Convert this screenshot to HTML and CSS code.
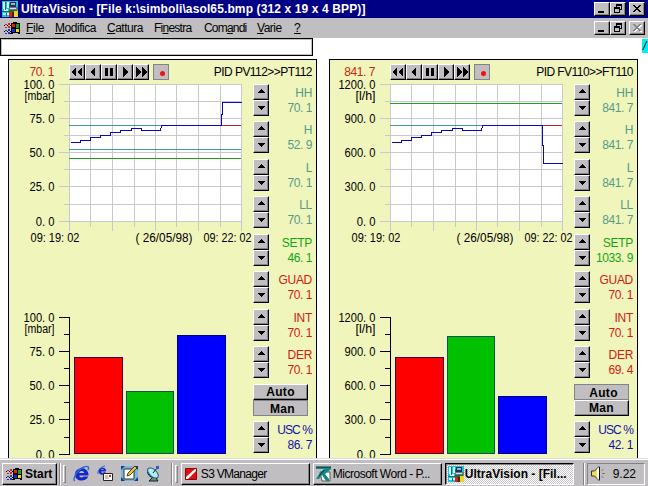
FILE: index.html
```html
<!DOCTYPE html>
<html lang="it">
<head>
    <meta charset="UTF-8">
    <title>UltraVision - [File k:\simboli\asol65.bmp (312 x 19 x 4 BPP)]</title>
    <link rel="stylesheet" href="styles.css">
</head>
<body>
    <!-- shared icons -->
    <svg class="defs" width="0" height="0">
        <symbol id="flag" viewBox="0 0 17 14">
            <path d="M7 2h2V1h4v1h3v11h-2v-1H9v1H7z" fill="#000"/>
            <path d="M8 3h3v3H8z" fill="#e02010"/><path d="M12 3h3v4h-3z" fill="#10a020"/>
            <path d="M8 8h3v3H8z" fill="#1030e0"/><path d="M12 8h3v3h-3z" fill="#f0e000"/>
            <path d="M1 3h2v1H1zM4 2h2v2H4zM1 6h2v1H1zM4 5h2v2H4z" fill="#d02030"/>
            <path d="M1 9h2v1H1zM4 8h2v2H4zM1 12h2v1H1zM4 11h2v2H4z" fill="#2030c0"/>
            <path d="M0 4h1v1H0zM3 4h1v1H3zM0 10h1v1H0zM3 10h1v1H3zM6 4h1v1H6zM6 10h1v1H6zM6 12h1v1H6z" fill="#000"/>
        </symbol>
        <symbol id="uv" viewBox="0 0 16 16">
            <path d="M0 0h16v16H0z" fill="#18c8d0"/>
            <path d="M1 1h2v7H1zM5 1h2v6H5zM2 8h4v2H2zM1 12h6v2H1z" fill="#d8f8f8"/>
            <path d="M3 1h1v8H3zM0 10h8v1H0zM4 12h1v3H4zM7 3h1v5H7z" fill="#087080"/>
            <path d="M8 1h6v5H8z" fill="#203060"/><path d="M9 2h4v2H9z" fill="#a0b0c0"/>
            <path d="M7 6h9v3H7z" fill="#707890"/><path d="M8 7h6v1H8z" fill="#e0e0e0"/>
            <path d="M7 9h8v7H7z" fill="#207020"/><path d="M7 11h3v5H7z" fill="#e02010"/>
            <path d="M12 10h4v6h-4z" fill="#e8d820"/><path d="M10 11h2v5h-2z" fill="#402010"/>
        </symbol>
        <symbol id="min" viewBox="0 0 12 10"><path d="M2 7h6v2H2z"/></symbol>
        <symbol id="restore" viewBox="0 0 12 10">
            <path d="M4 0h6v6H8V5h1V2H5v1H4zM2 3h6v6H2zM3 5v3h4V5z" fill-rule="evenodd"/>
        </symbol>
        <symbol id="close" viewBox="0 0 12 10">
            <path d="M2 1h2v1h1v1h2V2h1V1h2v1H9v1H8v1H7v1h1v1h1v1h1v1H8V7H7V6H5v1H4v1H2V7h1V6h1V5h1V4H4V3H3V2H2z"/>
        </symbol>
    </svg>

    <header class="titlebar">
        <svg class="app-icon"><use href="#uv"/></svg>
        <span class="caption">UltraVision - [File k:\simboli\asol65.bmp (312 x 19 x 4 BPP)]</span>
        <div class="win-btns">
            <button class="win-btn"><svg><use href="#min"/></svg></button>
            <button class="win-btn"><svg><use href="#restore"/></svg></button>
            <button class="win-btn close"><svg><use href="#close"/></svg></button>
        </div>
    </header>

    <nav class="menubar">
        <svg class="menu-icon"><use href="#flag"/></svg>
        <span class="m1"><u>F</u>ile</span>
        <span class="m2"><u>M</u>odifica</span>
        <span class="m3"><u>C</u>attura</span>
        <span class="m4">Fi<u>n</u>estra</span>
        <span class="m5">Com<u>a</u>ndi</span>
        <span class="m6"><u>V</u>arie</span>
        <span class="m7"><u>?</u></span>
        <div class="win-btns">
            <button class="win-btn"><svg><use href="#min"/></svg></button>
            <button class="win-btn"><svg><use href="#restore"/></svg></button>
            <button class="win-btn close disabled"><svg><use href="#close"/></svg></button>
        </div>
    </nav>

    <main class="client">
        <div class="top-row">
            <div class="field"></div>
            <div class="tag">/</div>
        </div>
        <div class="panels" id="panels"></div>
    </main>

    <footer class="taskbar">
        <button class="start"><svg><use href="#flag"/></svg><b>Start</b></button>
        <i class="sep"></i><i class="grip"></i>
        <div class="quick">
            <svg viewBox="0 0 17 17">
                <path d="M13 10.5H6.2C6.4 12.800 9.500 13 10.500 11.500h4.700C13.500 17 2 17.500 2 9.500S14.500 1 15.500 9v1.500zM6.200 8h5C11 5.300 6.500 5.300 6.200 8z" fill="#1428c8" fill-rule="evenodd"/>
                <path d="M2 15.500C-1 16 3 5 11 2c5-2 5 1 4 3" fill="none" stroke="#2868e0" stroke-width="1.400"/>
            </svg>
            <svg viewBox="0 0 17 17">
                <path d="M8.500 6.500H4.200c.3 1.800 2 1.600 2.500.8h2C7.500 11 1.500 10.500 1.500 6S9 1.500 9 5.500zM4.200 4.700h2.500c-.3-1.400-2.200-1.400-2.500 0z" fill="#1428c8" fill-rule="evenodd"/>
                <path d="M1 9C0 7 3 2 8 .8" fill="none" stroke="#2868e0"/>
                <path d="M6.500 8.500h9v7h-9z" fill="#fff" stroke="#222"/>
                <path d="M8 13h4M8 11h3" stroke="#888"/><path d="M12 10h2v2h-2z" fill="#d02020"/>
            </svg>
            <svg viewBox="0 0 17 17">
                <path d="M0 1h17v15H0z" fill="#103c90"/><path d="M0 5l4-4h9l4 4v7l-4 4H4l-4-4z" fill="#78b8d8"/>
                <path d="M3 4h10v10H3z" fill="#fff" stroke="#333"/>
                <path d="M6 11l1-3 7-7 2 2-7 7z" fill="#f0c030" stroke="#222" stroke-width=".8"/>
            </svg>
            <svg viewBox="0 0 17 17">
                <path d="M3 4c-2 7 4 10 10 8z" fill="#20a0a8" stroke="#124"/>
                <ellipse cx="8" cy="8" rx="6.500" ry="3.500" transform="rotate(42 8 8)" fill="#b8e8f0" stroke="#186878"/>
                <path d="M8 8l4-5M7 13l-3 3h9l-2-3" stroke="#123" fill="#688"/>
                <path d="M11 1h3v3h-3z" fill="#2060d0"/>
            </svg>
        </div>
        <i class="sep"></i><i class="grip"></i>
        <button class="task">
            <svg viewBox="0 0 16 16"><path d="M1.500 2.500h11v11h-11z" fill="#e01010" stroke="#900"/><path d="M2 13v-2l9-8h1v2l-8 8z" fill="#fff"/></svg>
            <span class="t1">S3 VManager</span>
        </button>
        <button class="task">
            <svg viewBox="0 0 16 16">
                <path d="M4 6h10v9H6z" fill="#fff" stroke="#555"/>
                <path d="M0 1h15v2L9 8l4 5v2h-3L6 9l-3 4H0l4-6 4-4H0z" fill="#108888"/>
                <path d="M0 1h15M8 4L3 10" stroke="#033"/>
            </svg>
            <span class="t2">Microsoft Word - P...</span>
        </button>
        <button class="task active">
            <svg><use href="#uv"/></svg>
            <span class="t3">UltraVision - [Fil...</span>
        </button>
        <i class="sep tray-sep"></i>
        <div class="tray">
            <svg viewBox="0 0 17 17">
                <path d="M2.500 6v5h3L10 15.500v-14L5.500 6z" fill="#f0e050" stroke="#333"/>
                <path d="M8 4v9l2 2V2z" fill="#fff"/><path d="M10.500 2v13" stroke="#111"/>
                <path d="M12.500 6l2-2M13 8.500h3M12.500 11l2 2" stroke="#777"/>
            </svg>
            <span>9.22</span>
        </div>
    </footer>

    <script>
        // Both panels share the same geometry; y values are screen rows
        const ROWS = [84, 101, 118, 135, 152, 169, 186, 204, 221];
        const COLS = [69, 90, 112, 134, 155, 176, 198, 220, 241];
        const HISTORY = "M70 142H80V140H90V137H100V135H110V132H120V130H131V128H141V130H160L161 125H221";

        const loops = [
            {
                value: "70. 1", title: "PID PV112>>PT112", unit: "[mbar]",
                scale: ["100. 0", "75. 0", "50. 0", "25. 0", "0. 0"],
                lines: [[125, "teal"], [149, "teal"], [158, "green"]],
                tail: "V114H222V102H241",
                bars: [357, 391, 335],
                params: [["HH", "70. 1"], ["H", "52. 9"], ["L", "70. 1"], ["LL", "70. 1"], ["SETP", "46. 1"],
                         ["GUAD", "70. 1"], ["INT", "70. 1"], ["DER", "70. 1"]],
                output: "86. 7", raised: "Auto"
            },
            {
                value: "841. 7", title: "PID FV110>>FT110", unit: "[l/h]",
                scale: ["1200. 0", "900. 0", "600. 0", "300. 0", "0. 0"],
                lines: [[103, "green"], [125, "teal"]],
                tail: "V145H222V163H241",
                bars: [357, 336, 396],
                params: [["HH", "841. 7"], ["H", "841. 7"], ["L", "841. 7"], ["LL", "841. 7"], ["SETP", "1033. 9"],
                         ["GUAD", "70. 1"], ["INT", "70. 1"], ["DER", "69. 4"]],
                output: "42. 1", raised: "Man"
            }
        ];

        const COLORS = ["teal", "teal", "teal", "teal", "green", "red", "red", "red"];
        const TRANSPORT = [
            "M2 8l5-5v10zM8 8l5-5v10z",
            "M5 8l5-5v10z",
            "M4 4h3v8H4zM9 4h3v8H9z",
            "M6 3l5 5-5 5z",
            "M3 3l5 5-5 5zM9 3l5 5-5 5z"
        ];

        const esc = s => s.replace(/>/g, "&gt;");

        // width of a label in the display font
        function labelWidth(s) {
            return [...s].reduce((w, c) => w + (c === "." || c === " " || c === ":" ? 3.3 : 6.1), 0);
        }

        function label(s, x, y, w) {
            return `<text x="${x - w}" y="${y}" textLength="${w}" lengthAdjust="spacingAndGlyphs">${s}</text>`;
        }

        function scaleLabels(p, top) {
            return p.scale.map((s, i) => label(s, 54.5, top + [0, 34, 68, 102, 137][i] + 5, labelWidth(s))).join("")
                + label(p.unit, 54.5, top + 16, p.unit === "[mbar]" ? 30 : 20);
        }

        function trend(p) {
            const grid = ROWS.map((y, i) => `M${i % 2 ? 64 : 59} ${y}.5H241`).join("")
                + COLS.map((x, i) => `M${x}.5 84V${i % 2 ? 227 : 231}`).join("");
            return `<svg class="trend" viewBox="9 84 244 226">
                <rect x="69" y="84" width="173" height="138" fill="#fff"/>
                <path class="grid" d="${grid}"/>
                ${p.lines.map(([y, c]) => `<path class="${c}" d="M69 ${y}.5H241"/>`).join("")}
                <path class="history" transform="translate(.5 .5)" d="${HISTORY}${p.tail}"/>
                <path class="red" d="M222 125.5H241"/>
                ${scaleLabels(p, 84)}
                ${label("09: 19: 02", 79.5, 242, 49)}
                ${label("( 26/05/98)", 192.5, 242, 57)}
                ${label("09: 22: 02", 251.5, 242, 48)}
            </svg>`;
        }

        function bars(p) {
            const ticks = ROWS.map((y, i) => `M${i % 2 ? 64 : 59} ${y + 233}.5H69`).join("");
            const fills = ["#ff0000", "#00c000", "#0000ff"];
            const edges = ["#400050", "#105060", "#000080"];
            return `<svg class="bars" viewBox="9 310 244 148">
                <path class="axis" d="${ticks}M69.5 317V455"/>
                ${p.bars.map((y, i) => `<rect x="${[74, 126, 177][i] + .5}" y="${y + .5}" width="${i === 1 ? 47 : 48}" height="${453 - y}" fill="${fills[i]}" stroke="${edges[i]}"/>`).join("")}
                ${scaleLabels(p, 317)}
            </svg>`;
        }

        const spinner = `<div class="spinner">
            <button><svg viewBox="0 0 14 14"><path d="M7 4h1v1h1v1h1v1h1v1H4V7h1V6h1V5h1z"/></svg></button>
            <button><svg viewBox="0 0 14 14"><path d="M4 5h7v1h-1v1H9v1H8v1H7V8H6V7H5V6H4z"/></svg></button>
        </div>`;

        function param(name, value, color) {
            return `<div class="param ${color}">${spinner}<div class="reading"><span>${name}</span><span class="num">${value}</span></div></div>`;
        }

        document.getElementById("panels").innerHTML = loops.map(p => `
            <section class="panel">
                <div class="panel-head">
                    <span class="value num">${p.value}</span>
                    <div class="transport">${TRANSPORT.map(d => `<button><svg viewBox="1 1 14 14"><path d="${d}"/></svg></button>`).join("")}</div>
                    <div class="rec"><i></i></div>
                    <span class="name">${esc(p.title)}</span>
                </div>
                <div class="panel-body">
                    <div class="plots">${trend(p)}${bars(p)}</div>
                    <div class="params">
                        ${p.params.map(([n, v], i) => param(n, v, COLORS[i])).join("")}
                        <div class="mode">
                            ${["Auto", "Man"].map(m => `<button class="${m === p.raised ? "" : "down"}">${m}</button>`).join("")}
                        </div>
                        ${param("USC %", p.output, "blue")}
                    </div>
                </div>
            </section>`).join("");
    </script>
</body>
</html>
```
FILE: styles.css
```css
* {
    box-sizing: border-box;
}

body {
    margin: 0;
    width: 648px;
    height: 486px;
    overflow: hidden;
    display: flex;
    flex-direction: column;
    background: #fff;
    font: 12px/14px "Liberation Sans", Arial, sans-serif;
    color: #000;
}

svg {
    display: block;
    flex: none;
}

.defs {
    display: none;
}

button {
    font: inherit;
    color: inherit;
    margin: 0;
    padding: 0;
    background: #c0bec0;
    border: 1px solid;
    border-color: #fff #000 #000 #fff;
    box-shadow: inset -1px -1px #848284;
    display: flex;
    align-items: center;
    flex: none;
}

/* title and menu */
.titlebar {
    flex: none;
    height: 18px;
    background: #000084;
    color: #fff;
    display: flex;
    align-items: center;
    padding: 0 3px 0 2px;
}

.app-icon {
    width: 16px;
    height: 16px;
}

.caption {
    font-weight: bold;
    margin-left: 3px;
    letter-spacing: 0.12px;
    white-space: nowrap;
}

.win-btns {
    display: flex;
    margin-left: auto;
}

.win-btn {
    width: 16px;
    height: 14px;
}

.win-btn svg {
    width: 12px;
    height: 10px;
    margin-left: 1px;
    shape-rendering: crispEdges;
}

.win-btn.close {
    margin-left: 3px;
}

.win-btn.disabled svg {
    fill: #848284;
    filter: drop-shadow(1px 1px 0 #fff);
}

.menubar {
    flex: none;
    height: 20px;
    background: #c0bec0;
    display: flex;
    align-items: center;
    padding: 0 3px 0 4px;
    white-space: nowrap;
}

.menubar u {
    text-underline-offset: 1px;
}

.menu-icon {
    width: 17px;
    height: 14px;
    margin-right: 5px;
}

.m1 { width: 29px; letter-spacing: -0.3px; }
.m2 { width: 52px; letter-spacing: -0.45px; }
.m3 { width: 47px; letter-spacing: -0.5px; }
.m4 { width: 50px; letter-spacing: -0.75px; }
.m5 { width: 53px; letter-spacing: -0.8px; }
.m6 { width: 37px; letter-spacing: -0.5px; }

/* client area */
.client {
    flex: none;
    height: 420px;
    overflow: hidden;
}

.top-row {
    display: flex;
    justify-content: space-between;
    height: 21px;
}

.field {
    width: 313px;
    height: 18px;
    border: 1px solid #000;
    box-shadow: inset 1px 1px #c0c0c0, inset -1px -1px #c0c0c0;
}

.tag {
    width: 6px;
    height: 14px;
    margin-top: 1px;
    padding-left: 1px;
    background: #00f0f0;
    overflow: hidden;
    font-style: italic;
}

.panels {
    display: flex;
    gap: 12px;
    padding-left: 8px;
}

.panel {
    width: 309px;
    height: 420px;
    border: 1px solid #000;
    background: #f0f5bc;
}

.panel-head {
    display: flex;
    height: 24px;
    padding: 4px 4px 0 0;
}

.panel-head .value {
    width: 45px;
    margin: 0 15px 0 0;
    padding-top: 1px;
    text-align: right;
    color: #c82810;
}

.transport {
    display: flex;
}

.transport button,
.spinner button {
    width: 16px;
    height: 16px;
}

.transport svg,
.spinner svg {
    width: 14px;
    height: 14px;
    shape-rendering: crispEdges;
}

.rec {
    width: 16px;
    height: 16px;
    margin-left: 4px;
    padding: 6px 0 0 6px;
    border: 1px solid #848284;
    background: #c0bec0;
}

.rec i {
    display: block;
    width: 5px;
    height: 5px;
    border-radius: 50%;
    background: #f01010;
}

.name {
    margin-left: auto;
    padding-top: 1px;
    letter-spacing: -0.55px;
    white-space: nowrap;
}

.num {
    letter-spacing: -0.45px;
}

.panel-body {
    display: flex;
}

.plots {
    width: 244px;
}

.plots svg {
    width: 244px;
    overflow: visible;
}

.trend {
    height: 226px;
}

.bars {
    height: 148px;
}

.plots path {
    fill: none;
    shape-rendering: crispEdges;
}

.plots text {
    font-size: 12.5px;
}

path.grid { stroke: #c8c8d0; }
path.axis { stroke: #000; }
path.teal { stroke: #4a9898; }
path.green { stroke: #20a020; }
path.red { stroke: #c02020; }
path.history { stroke: #0808b8; }

.params {
    width: 59px;
    margin-top: -0.2px;
}

.param {
    display: flex;
    height: 37.5px;
}

.param.teal { color: #559c88; }
.param.green { color: #10a810; }
.param.red { color: #d02010; }
.param.blue { color: #1010a8; }

.spinner svg {
    fill: #000;
}

.reading {
    flex: 1;
    display: flex;
    flex-direction: column;
    align-items: flex-end;
    padding-top: 2px;
    line-height: 15px;
    letter-spacing: -0.3px;
    white-space: nowrap;
}

.blue .reading {
    letter-spacing: -0.9px;
}

.reading .num {
    letter-spacing: -0.45px;
}

.mode {
    height: 37.5px;
}

.mode button {
    width: 55px;
    height: 16px;
    justify-content: center;
    font-weight: bold;
    font-size: 12px;
    letter-spacing: 0.3px;
}

.mode .down {
    border-color: #848284;
    box-shadow: none;
    padding: 3px 0 0 4px;
}

/* taskbar */
.taskbar {
    flex: none;
    height: 28px;
    background: #c0bec0;
    border-top: 1px solid #dedcde;
    box-shadow: inset 0 1px #fff;
    display: flex;
    align-items: center;
    padding: 2px 3px 0 2px;
}

.start {
    width: 55px;
    height: 22px;
    padding-left: 3px;
}

.start svg {
    width: 17px;
    height: 14px;
    margin-right: 2px;
}

.start b {
    letter-spacing: 0;
}

.sep {
    width: 2px;
    height: 22px;
    margin-left: 2px;
    border-left: 1px solid #848284;
    border-right: 1px solid #fff;
}

.grip {
    width: 3px;
    height: 18px;
    margin-left: 2px;
    border: 1px solid;
    border-color: #fff #848284 #848284 #fff;
}

.quick {
    display: flex;
    gap: 7px;
    margin: 0 7px 0 7px;
}

.quick svg {
    width: 17px;
    height: 17px;
}

.task {
    width: 129px;
    height: 22px;
    margin-left: 3px;
    padding-left: 2px;
    white-space: nowrap;
}

.task svg {
    width: 16px;
    height: 16px;
    margin-right: 1px;
}

.task.active {
    border-color: #000 #fff #fff #000;
    box-shadow: inset 1px 1px #848284;
    background: repeating-conic-gradient(#fff 0 25%, #c8c6c8 0 50%) 0 0 / 2px 2px;
    font-weight: bold;
}

.t1 { letter-spacing: -0.7px; }
.t2 { letter-spacing: -0.5px; }
.t3 { letter-spacing: 0; }

.tray-sep {
    margin-left: 9px;
}

.tray {
    display: flex;
    align-items: center;
    justify-content: space-between;
    width: 62px;
    height: 22px;
    margin-left: 2px;
    padding: 0 8px 0 1px;
    border: 1px solid;
    border-color: #848284 #fff #fff #848284;
}

.tray svg {
    width: 17px;
    height: 17px;
}
```
